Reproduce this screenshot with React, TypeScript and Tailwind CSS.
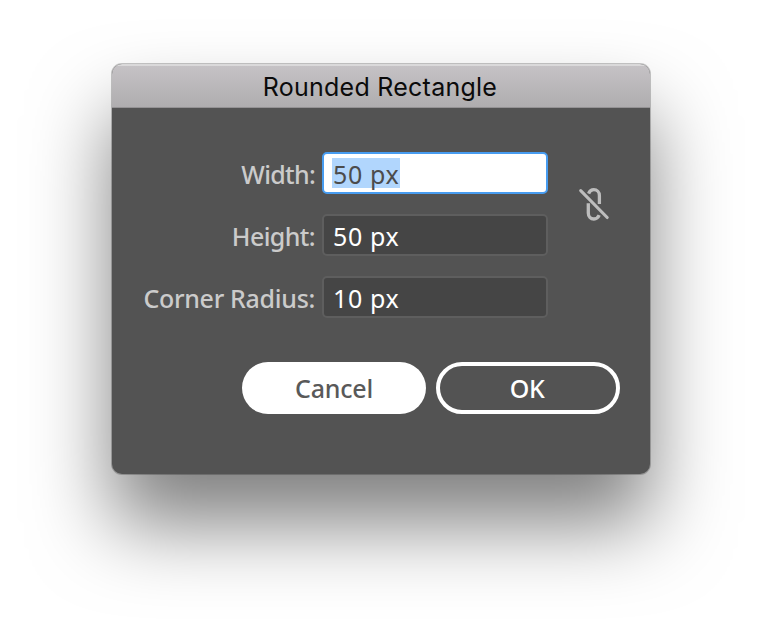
type FieldProps = { label: string; value: string; spacing: string; selected?: boolean };

function Field({ label, value, spacing, selected }: FieldProps) {
  return (
    <div className="flex h-[42px] items-center">
      <div className={`w-[203px] whitespace-nowrap pt-[3px] text-right font-medium text-[#cbcbcb] ${spacing}`}>
        {label}
      </div>
      <div
        className={`ml-[7px] flex h-[42px] w-[226px] items-center rounded-[5px] border-2 pl-2 ${
          selected ? "border-[#479cf0] bg-white text-[#4c4c4c]" : "border-[#5e5e5e] bg-[#454545] text-white"
        }`}
      >
        <span
          className={`flex h-[30px] w-[68px] items-center whitespace-nowrap pl-px ${selected ? "bg-[#b1d6fd]" : ""}`}
        >
          <span className="relative top-px tracking-[0.6px]">{value}</span>
        </span>
      </div>
    </div>
  );
}

function UnlinkedIcon() {
  return (
    <svg width="34" height="38" viewBox="0 0 34 38" fill="none" stroke="#bdbdbd" strokeWidth="3.3">
      <path d="M11.6 7.6C12.6 5 14.4 3.7 16.8 3.7C20 3.7 22.4 6.2 22.4 9.5V18" />
      <path d="M11.3 17.2V27C11.3 30.6 13.6 33 16.9 33C19.4 33 21.2 31.6 22.2 29.2" />
      <path d="M3.7 4.7L30.2 31.5" strokeLinecap="round" strokeWidth="3.1" />
    </svg>
  );
}

export default function App() {
  return (
    <div className="h-[634px] w-[762px] overflow-hidden bg-white pl-[112px] pt-16">
      <div className="h-[410px] w-[538px] overflow-hidden rounded-[10px] bg-[#535353] font-['Noto_Sans',sans-serif] text-[25px] leading-none shadow-[0_0_0_1px_rgba(0,0,0,0.22),0_50px_80px_rgba(0,0,0,0.5)]">
        <div className="flex h-11 items-center justify-center border-b border-t-2 border-b-[#949294] border-t-[#dad9da] bg-linear-to-b from-[#c5c2c5] to-[#afadaf] font-['Inter',sans-serif] tracking-[0.25px] text-[#0b0b0b]">
          <span className="relative -left-px top-px whitespace-nowrap">Rounded Rectangle</span>
        </div>
        <div className="flex pt-11">
          <div className="flex flex-col gap-5">
            <Field label="Width:" value="50 px" spacing="tracking-[-0.7px]" selected />
            <Field label="Height:" value="50 px" spacing="tracking-[-0.6px]" />
            <Field label="Corner Radius:" value="10 px" spacing="tracking-[-0.3px]" />
          </div>
          <div className="ml-[29px] mt-[34px]">
            <UnlinkedIcon />
          </div>
        </div>
        <div className="mt-11 flex gap-2.5 pl-[130px]">
          <button className="flex h-[52px] w-[184px] items-center justify-center rounded-full bg-white font-medium text-[#595959]">
            <span className="tracking-[-0.2px]">Cancel</span>
          </button>
          <button className="flex h-[52px] w-[184px] items-center justify-center rounded-full border-4 border-white font-medium text-white">
            <span className="relative -left-px tracking-[-0.5px]">OK</span>
          </button>
        </div>
      </div>
    </div>
  );
}
